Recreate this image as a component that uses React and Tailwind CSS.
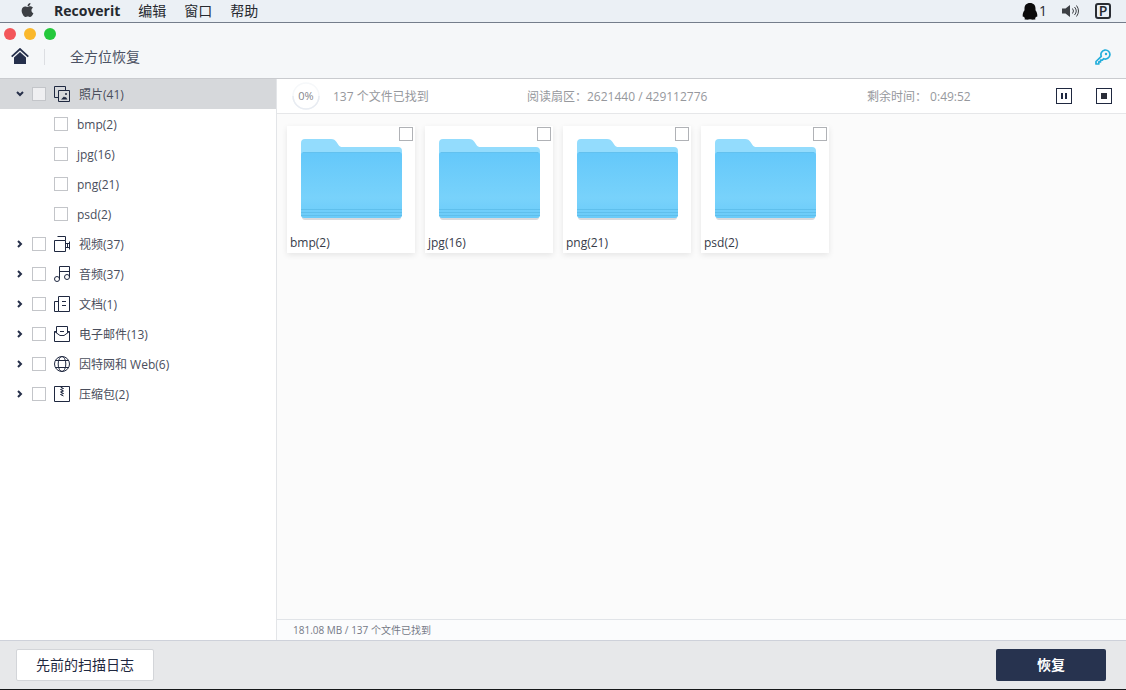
import React, { useState } from "react";
import { FaApple } from "react-icons/fa";

const folders = ["bmp(2)", "jpg(16)", "png(21)", "psd(2)"];

const categories = [
  { id: "photo", label: "照片(41)", items: folders },
  { id: "video", label: "视频(37)", items: [] },
  { id: "audio", label: "音频(37)", items: [] },
  { id: "document", label: "文档(1)", items: [] },
  { id: "email", label: "电子邮件(13)", items: [] },
  { id: "web", label: "因特网和 Web(6)", items: [] },
  { id: "archive", label: "压缩包(2)", items: [] },
];

const iconShapes = {
  photo: (
    <>
      <path d="M4 11.500H.500V.500h11V4" />
      <path d="M4.500 4.500h11v11h-11z" />
      <path d="M7 13.500l3-3 1 1 .8-.5 1.700 2.500z" fill="currentColor" stroke="none" />
      <circle cx="12" cy="8" r="1" fill="currentColor" stroke="none" />
    </>
  ),
  video: (
    <>
      <path d="M.5 4.500h11v11H.5z" />
      <path d="M3.500.500h8v4" />
      <path d="M11.500 7.500h4M11.500 11.500h4M13.500 7.500v4M15.500 5.500v8" />
    </>
  ),
  audio: (
    <>
      <path d="M5.500 13V.500h10V11M5.500 5.500h10" />
      <circle cx="3" cy="13" r="2.500" />
      <circle cx="13" cy="11" r="2.500" />
    </>
  ),
  document: (
    <>
      <path d="M4.500.500h11v15h-11z" />
      <path d="M4.500 5.500h-4v10h4" />
      <path d="M8 5.500h4M8 9.500h4" />
    </>
  ),
  email: (
    <>
      <path d="M2.500 7V.500h11V7" />
      <path d="M2.500 5.500h-2v10h15v-10h-2" />
      <path d="M.500 5.500l5.500 4h4l5.500-4M6 5.500h4" />
    </>
  ),
  web: (
    <>
      <circle cx="8" cy="8" r="7.500" />
      <ellipse cx="8" cy="8" rx="3.800" ry="7.500" />
      <path d="M1.500 4.500h13M1.500 11.500h13" />
    </>
  ),
  archive: (
    <>
      <path d="M.500.500h15v15H.500z" />
      <path d="M6.500 1l3 1.500-3 1 3 1.500-3 1 3 1.500-3 1 3 1.500" />
    </>
  ),
};

function CategoryIcon({ id }) {
  return (
    <svg viewBox="0 0 16 16" className="w-4 h-4 text-[#1f2840]" fill="none" stroke="currentColor">
      {iconShapes[id]}
    </svg>
  );
}

function Checkbox({ className = "border-[#c3c5c9]", ...props }) {
  return (
    <input
      type="checkbox"
      className={`appearance-none w-3.5 h-3.5 shrink-0 border bg-white/60 checked:bg-[#27334f] ${className}`}
      {...props}
    />
  );
}

function FolderIcon() {
  return (
    <svg viewBox="0 0 101 82" className="w-[101px] h-[82px]" aria-hidden="true">
      <defs>
        <linearGradient id="folderFront" x1="0" y1="0" x2="0" y2="1">
          <stop offset="0" stopColor="#64c8fa" />
          <stop offset="0.7" stopColor="#78d2fb" />
          <stop offset="1" stopColor="#6bcbf9" />
        </linearGradient>
      </defs>
      <rect x="1" y="74" width="99" height="7" rx="3" fill="#d9d9dc" />
      <path d="M0 4a4 4 0 0 1 4-4h26c3 0 4 1 5.500 3l2 3c1 1.500 2 2 4 2h55.500a4 4 0 0 1 4 4v20H0z" fill="#93dcfd" />
      <path d="M0 16a3 3 0 0 1 3-3h95a3 3 0 0 1 3 3v60a3 3 0 0 1-3 3H3a3 3 0 0 1-3-3z" fill="url(#folderFront)" />
      <path d="M2 13.500h97" stroke="#62c1ef" />
      <path d="M0 70.500h101M0 73.500h101M0 76.500h101" stroke="#5fbfec" />
    </svg>
  );
}

function MenuBar() {
  return (
    <nav className="h-[23px] shrink-0 flex items-center pl-5 pr-[15px] bg-[#ebf0f5] border-b border-[#747d8b] text-sm text-[#26292f]">
      <FaApple className="w-[15px] h-4 mb-0.5 text-[#3c3f44]" />
      <div className="flex items-center gap-[18px] ml-[19px]">
        <button type="button" className="font-bold">Recoverit</button>
        <button type="button">编辑</button>
        <button type="button">窗口</button>
        <button type="button">帮助</button>
      </div>
      <div className="ml-auto flex items-center">
        <svg viewBox="0 0 16 17" className="w-4 h-[17px]" fill="#0b0b0c">
          <path d="M8 0c3.600 0 5.500 2.300 5.500 5.500v1.800c1.300 1.800 2 3.700 1.800 6-.1 1-.7.800-1.200.300-.2.700-.6 1.200-1.100 1.600.8.500.7 1.200-.5 1.400-1.500.2-3 .1-4.500-.3-1.500.4-3 .5-4.500.3-1.200-.2-1.300-.9-.5-1.400-.5-.4-.9-.9-1.100-1.600-.5.500-1.100.7-1.200-.3-.2-2.300.5-4.200 1.800-6V5.500C2.500 2.300 4.400 0 8 0z" />
        </svg>
        <span className="ml-[1px]">1</span>
        <svg viewBox="0 0 17 14" className="w-[17px] h-3.5 ml-[15px] text-[#3d4045]" fill="none" stroke="currentColor">
          <path d="M0 4.500h3.500L8 1v12L3.500 9.500H0z" fill="currentColor" stroke="none" />
          <path d="M10.500 4.500q2 2.500 0 5M12.500 3q3.500 4 0 8M14.500 1.500q4 5.500 0 11" />
        </svg>
        <span className="ml-4 w-4 h-4 flex items-center justify-center border-2 border-[#2a2d33] rounded-[3px] text-sm leading-3 font-semibold">
          P
        </span>
      </div>
    </nav>
  );
}

function Header() {
  return (
    <header className="h-14 shrink-0 pt-[5px] bg-[#f5f7f9] border-b border-[#c9cbcf]">
      <div className="flex gap-2 pl-1">
        <button type="button" aria-label="Close" className="w-3 h-3 rounded-full bg-[#f3565a]" />
        <button type="button" aria-label="Minimize" className="w-3 h-3 rounded-full bg-[#fab82c]" />
        <button type="button" aria-label="Zoom" className="w-3 h-3 rounded-full bg-[#24c83c]" />
      </div>
      <div className="h-[34px] flex items-center pl-[11px] pr-[15px]">
        <button type="button" aria-label="Home" className="pb-0.5">
          <svg viewBox="0 0 18 16" className="w-[18px] h-4" fill="#252f4c">
            <path d="M.7 8.600L9 1l8.300 7.600" fill="none" stroke="#252f4c" strokeWidth="1.800" />
            <path d="M3 9.500L9 4l6 5.500V16H3z" />
          </svg>
        </button>
        <div className="w-px h-4 ml-[15px] bg-[#dcdee2]" />
        <h1 className="ml-[25px] text-sm text-[#4c5264]">全方位恢复</h1>
        <button type="button" aria-label="Activate" className="ml-auto">
          <svg viewBox="0 0 16 16" className="w-4 h-4" fill="none" stroke="#23aedb" strokeWidth="1.700" strokeLinejoin="round">
            <path d="M6.300 7.300A4.500 4.500 0 1 1 8.800 9.700L7.300 11.200H5.500v1.700H3.800V15H1v-2.500z" />
            <circle cx="11" cy="5" r="1.200" fill="#23aedb" stroke="none" />
          </svg>
        </button>
      </div>
    </header>
  );
}

function Sidebar() {
  const [open, setOpen] = useState({ photo: true });
  const toggle = (id) => setOpen({ ...open, [id]: !open[id] });

  return (
    <aside className="w-[277px] shrink-0 bg-white border-r border-[#e3e5e8] text-xs text-[#4a4e5c]">
      <ul>
        {categories.map((cat) => (
          <li key={cat.id}>
            <div className={`h-[30px] flex items-center pl-4 ${cat.id === "photo" ? "bg-[#d6d8db]" : ""}`}>
              <button type="button" aria-label={cat.label} aria-expanded={!!open[cat.id]} onClick={() => toggle(cat.id)}>
                <svg
                  viewBox="0 0 8 8"
                  className={`w-2 h-2 ${open[cat.id] ? "rotate-90" : ""}`}
                  fill="none"
                  stroke="#27304a"
                  strokeWidth="2"
                >
                  <path d="M2 1l3 3-3 3" />
                </svg>
              </button>
              <label className="flex items-center ml-2">
                <Checkbox />
                <span className="ml-2 mr-[9px]">
                  <CategoryIcon id={cat.id} />
                </span>
                <span className="pt-0.5">{cat.label}</span>
              </label>
            </div>
            {open[cat.id] && (
              <ul>
                {cat.items.map((item) => (
                  <li key={item}>
                    <label className="h-[30px] flex items-center gap-[9px] pl-[54px]">
                      <Checkbox />
                      <span className="pt-0.5">{item}</span>
                    </label>
                  </li>
                ))}
              </ul>
            )}
          </li>
        ))}
      </ul>
    </aside>
  );
}

function ScanStatus() {
  return (
    <div className="h-[35px] shrink-0 flex items-center pl-[15px] pr-3.5 bg-white border-b border-[#e6e7e9] text-xs text-[#96989d]">
      <div className="relative w-7 h-7 shrink-0 flex items-center justify-center text-[11px] text-[#85878c]">
        <svg viewBox="0 0 28 28" className="absolute inset-0" fill="none" strokeWidth="1.500">
          <circle cx="14" cy="14" r="13" stroke="#f6f8fa" />
          <path d="M1 14a13 13 0 0 0 26 0" stroke="#e8ecf2" />
        </svg>
        <span className="relative">0%</span>
      </div>
      <div className="flex-1 ml-[13px] pt-0.5 grid grid-cols-[194fr_340fr_189fr]">
        <span>137 个文件已找到</span>
        <span>阅读扇区：2621440 / 429112776</span>
        <span>剩余时间： 0:49:52</span>
      </div>
      <div className="flex gap-6">
        <button type="button" aria-label="Pause" className="w-4 h-4 flex items-center justify-center gap-0.5 border border-[#1f2840]">
          <span className="w-0.5 h-1.5 bg-[#1f2840]" />
          <span className="w-0.5 h-1.5 bg-[#1f2840]" />
        </button>
        <button type="button" aria-label="Stop" className="w-4 h-4 flex items-center justify-center border border-[#1f2840]">
          <span className="w-1.5 h-1.5 bg-[#2b2e38]" />
        </button>
      </div>
    </div>
  );
}

export default function App() {
  return (
    <div className="min-h-screen flex flex-col bg-[#fbfbfb] font-['Open_Sans','Noto_Sans_CJK_SC',sans-serif]">
      <MenuBar />
      <Header />

      <div className="flex-1 flex">
        <Sidebar />
        <main className="flex-1 flex flex-col">
          <ScanStatus />

          {/* Folders */}
          <div className="flex-1 flex flex-wrap content-start gap-2.5 pt-3 px-2.5">
            {folders.map((name) => (
              <label key={name} className="relative w-32 h-[127px] bg-white shadow-[0_2px_6px_rgba(0,0,0,0.09)] pt-[13px] text-xs text-[#363b49]">
                <Checkbox className="absolute top-[1px] right-[2px] border-[#b0b2b6]" />
                <div className="pl-3.5">
                  <FolderIcon />
                </div>
                <span className="block mt-3.5 pl-[3px]">{name}</span>
              </label>
            ))}
          </div>

          <p className="h-[21px] flex items-center pl-4 bg-[#fbfcfd] border-t border-[#e1e4e8] text-[10px] text-[#757986]">
            181.08 MB / 137 个文件已找到
          </p>
        </main>
      </div>

      {/* Bottom actions */}
      <footer className="h-[50px] shrink-0 flex items-center justify-between pl-4 pr-5 bg-[#e7e8ea] border-t border-t-[#ced1da] border-b border-b-[#16181a] text-sm">
        <button type="button" className="w-[138px] h-8 bg-white border border-[#d3d5d9] rounded-xs text-[#1f2840]">
          先前的扫描日志
        </button>
        <button type="button" className="w-[110px] h-8 bg-[#27334f] rounded-xs text-white font-bold">
          恢复
        </button>
      </footer>
    </div>
  );
}
